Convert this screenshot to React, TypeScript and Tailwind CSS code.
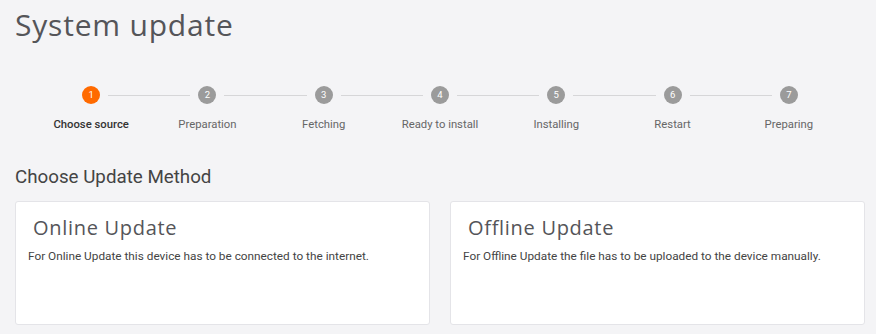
import React from "react";

const steps = ["Choose source", "Preparation", "Fetching", "Ready to install", "Installing", "Restart", "Preparing"];

export default function App() {
  return (
    <div className="w-[876px] h-[334px] overflow-hidden bg-[#f4f4f6] pl-[15px] pr-[11px] pt-[8px]" style={{ fontFamily: "Roboto, 'Liberation Sans', sans-serif" }}>
      <h1 className="text-[30px] leading-[34px] text-[#555559] tracking-[0.8px]" style={{ fontFamily: "'Open Sans', sans-serif" }}>
        System update
      </h1>
      <div className="grid grid-cols-7 px-[18px] mt-[44px]">
        {steps.map((s, i) => (
          <div key={s} className="relative flex flex-col items-center">
            {i > 0 && (
              <div className="absolute top-[9px] left-[calc(-50%+17px)] right-[calc(50%+17px)] h-px bg-[#d6d6d8]" />
            )}
            <div
              className={`w-[18px] h-[18px] rounded-full flex items-center justify-center text-[9.5px] text-white ${i === 0 ? "bg-[#ff6a00]" : "bg-[#9b9b9b]"}`}
            >
              {i + 1}
            </div>
            <div className={`mt-[14px] text-[11.3px] leading-[14px] whitespace-nowrap ${i === 0 ? "text-[#333] font-medium" : "text-[#666]"}`}>{s}</div>
          </div>
        ))}
      </div>
      <h2 className="mt-[34px] text-[18.75px] leading-[22px] text-[#444]">Choose Update Method</h2>
      <div className="mt-[13px] grid grid-cols-2 gap-[20px]">
        {[
          ["Online Update", "For Online Update this device has to be connected to the internet."],
          ["Offline Update", "For Offline Update the file has to be uploaded to the device manually."],
        ].map(([t, d]) => (
          <div key={t} className="h-[124px] bg-white border border-[#e4e4e8] rounded-[3px] px-[12px] pt-[14px]">
            <div className="pl-[5px] text-[20px] leading-[24px] text-[#555559] tracking-[0.7px]" style={{ fontFamily: "'Open Sans', sans-serif" }}>{t}</div>
            <div className="mt-[9px] text-[11.8px] leading-[14px] text-[#444]">{d}</div>
          </div>
        ))}
      </div>
    </div>
  );
}
